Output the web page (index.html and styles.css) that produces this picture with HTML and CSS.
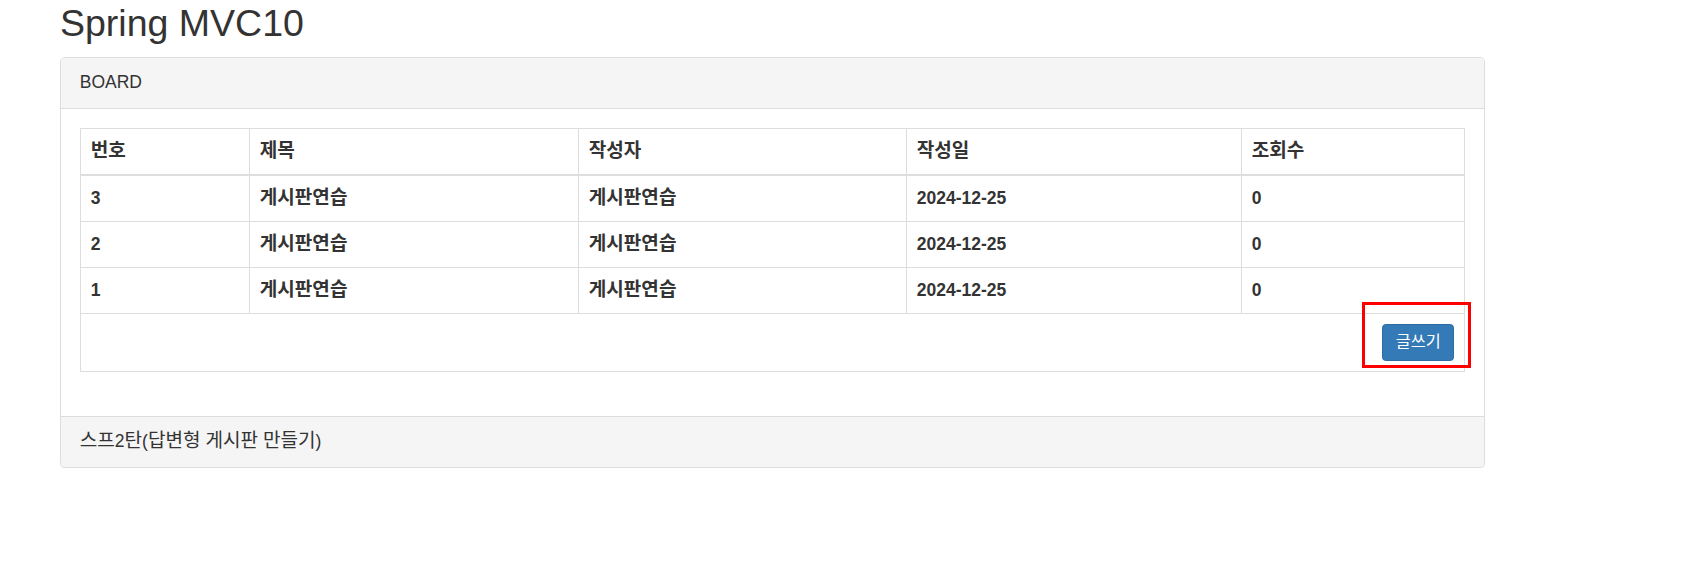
FILE: index.html
```html
<!DOCTYPE html>
<html lang="ko">
<head>
<meta charset="utf-8">
<title>Spring MVC10</title>
<link rel="stylesheet" href="styles.css">
</head>
<body>
<div class="container">
  <h2 class="title">Spring MVC10</h2>
  <div class="panel">
    <div class="panel-heading">BOARD</div>
    <div class="panel-body">
      <table class="board">
        <colgroup>
          <col class="c1"><col class="c2"><col class="c3"><col class="c4"><col class="c5">
        </colgroup>
        <thead>
          <tr><th><span class="ko">번호</span></th><th><span class="ko">제목</span></th><th><span class="ko">작성자</span></th><th><span class="ko">작성일</span></th><th><span class="ko">조회수</span></th></tr>
        </thead>
        <tbody>
          <tr><td>3</td><td><span class="ko">게시판연습</span></td><td><span class="ko">게시판연습</span></td><td>2024-12-25</td><td>0</td></tr>
          <tr><td>2</td><td><span class="ko">게시판연습</span></td><td><span class="ko">게시판연습</span></td><td>2024-12-25</td><td>0</td></tr>
          <tr><td>1</td><td><span class="ko">게시판연습</span></td><td><span class="ko">게시판연습</span></td><td>2024-12-25</td><td>0</td></tr>
          <tr><td colspan="5" class="actions"><span class="btn-wrap"><button class="btn"><span class="ko">글쓰기</span></button><span class="mark"></span></span></td></tr>
        </tbody>
      </table>
    </div>
    <div class="panel-footer"><span class="ko">스프</span>2<span class="ko">탄</span>(<span class="ko">답변형</span> <span class="ko">게시판</span> <span class="ko">만들기</span>)</div>
  </div>
</div>
</body>
</html>
```
FILE: styles.css
```css
html, body {
  margin: 0;
  padding: 0;
  background: #fff;
}
body {
  font-family: "Liberation Sans", Arial, "Noto Sans CJK KR", sans-serif;
  font-size: 17.5px;
  line-height: 25px;
  color: #333;
}
.ko {
  font-family: "Noto Sans CJK KR", sans-serif;
  font-size: 1.09em;
  line-height: 1;
}
.container {
  padding-left: 60px;
  width: 1425px;
}
.title {
  font-size: 37.5px;
  line-height: 41.25px;
  font-weight: 500;
  margin: 3px 0 12.5px;
  color: #333;
}
.panel {
  border: 1px solid #ddd;
  border-radius: 5px;
  box-shadow: 0 1px 1px rgba(0,0,0,.05);
  background: #fff;
}
.panel-heading {
  background: #f5f5f5;
  border-bottom: 1px solid #ddd;
  padding: 12.5px 18.75px;
  border-radius: 4px 4px 0 0;
}
.panel-body {
  padding: 18.75px 18.75px 18.75px;
}
.board {
  width: 100%;
  border-collapse: collapse;
  table-layout: fixed;
  margin-bottom: 25px;
}
.c1 { width: 169px; }
.c2 { width: 329px; }
.c3 { width: 328px; }
.c4 { width: 335px; }
.c5 { width: auto; }
.board th, .board td {
  border: 1px solid #ddd;
  padding: 10px;
  height: 25px;
  line-height: 25px;
  text-align: left;
  vertical-align: top;
  font-weight: bold;
}
.board thead th {
  border-bottom: 2px solid #ddd;
}
.board td.actions {
  text-align: right;
  padding: 10px 10px 10px;
}
.btn-wrap {
  position: relative;
  display: inline-block;
  vertical-align: top;
}
.btn {
  display: block;
  font-family: "Liberation Sans", Arial, "Noto Sans CJK KR", sans-serif;
  font-size: 15px;
  line-height: 22.5px;
  height: 37.5px;
  padding: 0 12.5px;
  color: #fff;
  background: #337ab7;
  border: 1px solid #2e6da4;
  border-radius: 3.75px;
  font-weight: normal;
}
.mark {
  position: absolute;
  left: -20px;
  right: -17px;
  top: -22px;
  bottom: -7px;
  border: 3px solid #f00;
}
.panel-footer {
  background: #f5f5f5;
  border-top: 1px solid #ddd;
  padding: 12.5px 18.75px;
  height: 25px;
  border-radius: 0 0 4px 4px;
}
```
